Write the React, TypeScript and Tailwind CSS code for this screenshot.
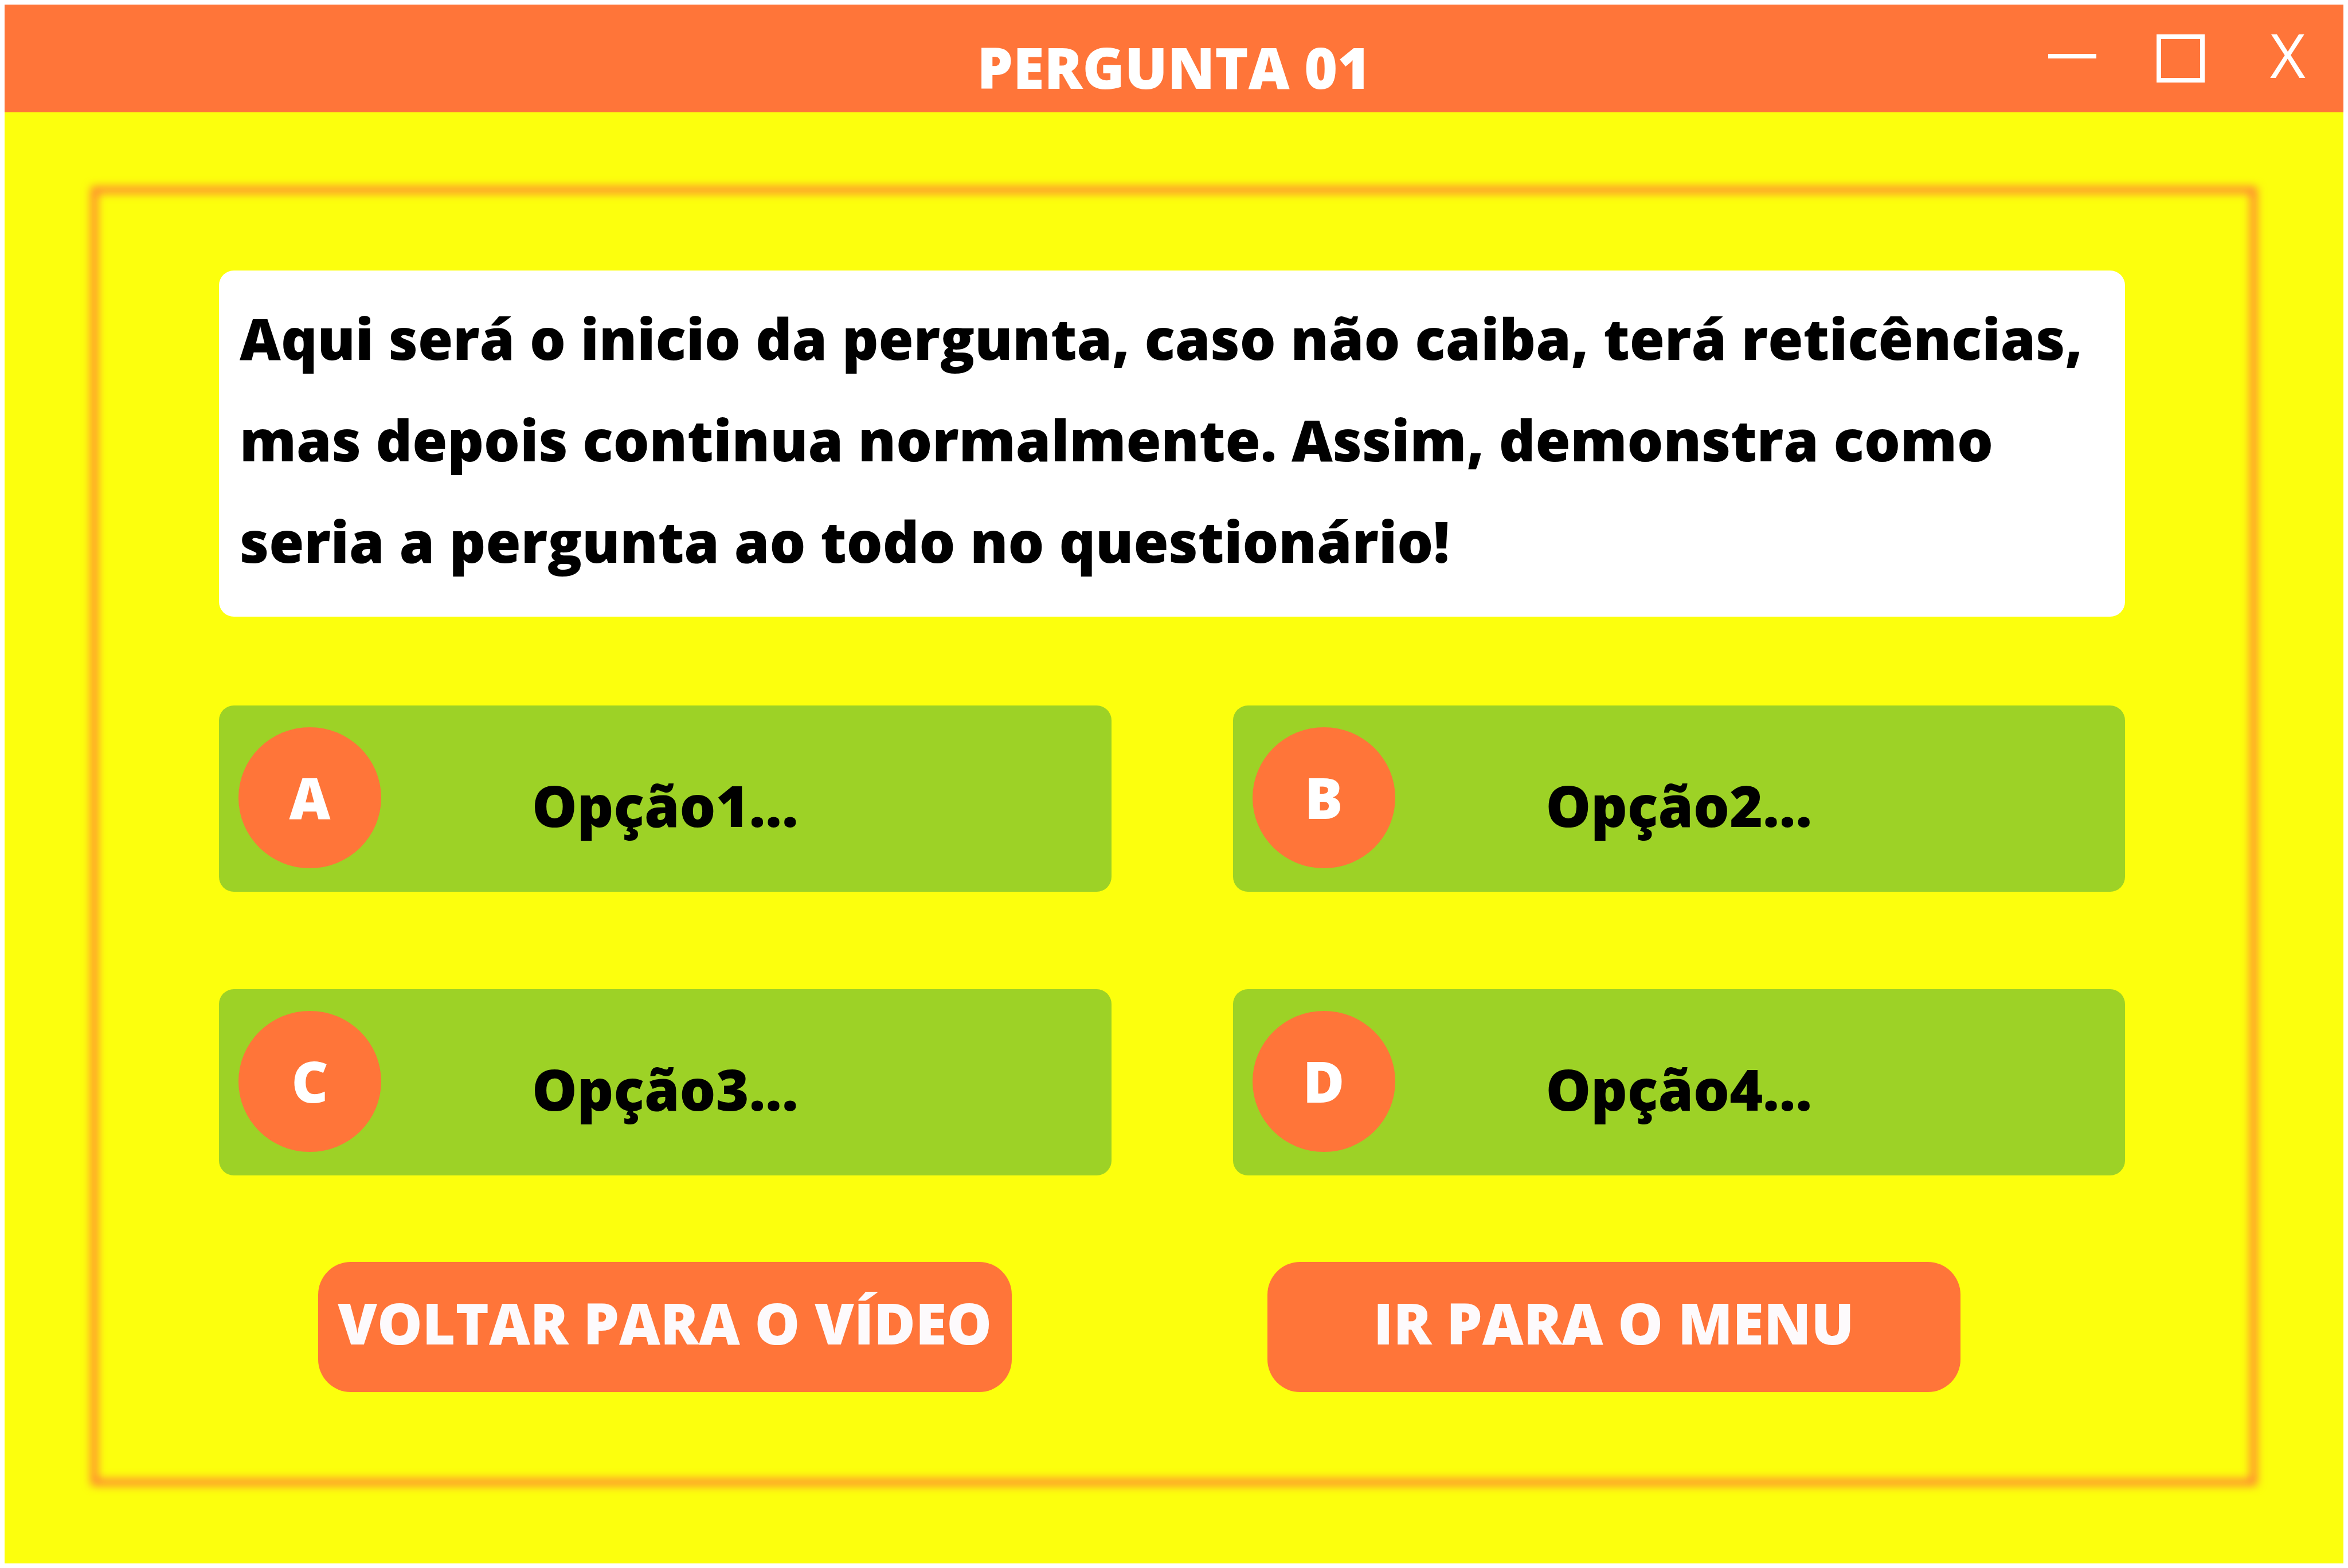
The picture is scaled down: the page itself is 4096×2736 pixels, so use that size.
const options = [
  { letter: "A", label: "Opção1..." },
  { letter: "B", label: "Opção2..." },
  { letter: "C", label: "Opção3..." },
  { letter: "D", label: "Opção4..." },
];

const actions = ["VOLTAR PARA O VÍDEO", "IR PARA O MENU"];

function WindowControls() {
  return (
    <div className="flex items-center gap-[105px] justify-self-end pr-[57px] text-white">
      <button type="button" aria-label="Minimizar">
        <svg className="size-[84px]" viewBox="0 0 84 84" aria-hidden="true">
          <path d="M0 38H84" stroke="currentColor" strokeWidth="8" />
        </svg>
      </button>
      <button type="button" aria-label="Maximizar">
        <svg className="size-[84px]" viewBox="0 0 84 84" fill="none" aria-hidden="true">
          <rect x="4" y="4" width="76" height="76" stroke="currentColor" strokeWidth="8" />
        </svg>
      </button>
      <button
        type="button"
        aria-label="Fechar"
        className="w-[80px] pb-4 text-center text-[107px] leading-[131px] font-medium"
      >
        X
      </button>
    </div>
  );
}

function Option({ letter, label }: { letter: string; label: string }) {
  return (
    <button
      type="button"
      className="grid grid-cols-[249px_1fr_249px] items-center rounded-[26px] bg-[#9dd226] px-[34px] pt-[38px] pb-[41px]"
    >
      <span className="flex h-[246px] items-center justify-center rounded-[50%] bg-[#ff7539] pb-1 text-white">
        {letter}
      </span>
      <span className="pt-[24px] text-center text-black">{label}</span>
    </button>
  );
}

export default function App() {
  return (
    <div className="flex min-h-screen flex-col bg-white p-2 font-['Open_Sans','Noto_Sans',sans-serif] text-[99px] leading-[131px] font-extrabold">
      <header className="grid grid-cols-[1fr_auto_1fr] items-center bg-[#ff7539]">
        <h1 className="col-start-2 pt-[43px] pb-[14px] text-white">PERGUNTA 01</h1>
        <WindowControls />
      </header>

      <main className="flex flex-1 flex-col bg-[#fcff0d] px-[151px] pt-[130px] pb-[136px]">
        <div className="relative flex-1 pt-[146px] pr-[230px] pl-[223px]">
          <div
            aria-hidden="true"
            className="pointer-events-none absolute inset-0 border-[11px] border-[#ff7539] blur-[8px]"
          />

          <div className="relative">
            <p className="rounded-[26px] bg-white pt-[29px] pr-[36px] pb-[44px] pl-[36px] leading-[177px] text-black">
              Aqui será o inicio da pergunta, caso não caiba, terá reticências, mas depois continua
              normalmente. Assim, demonstra como seria a pergunta ao todo no questionário!
            </p>

            <div className="mt-[155px] grid grid-cols-2 gap-x-[212px] gap-y-[170px]">
              {options.map((option) => (
                <Option key={option.letter} letter={option.letter} label={option.label} />
              ))}
            </div>

            <div className="mt-[151px] grid grid-cols-2 gap-[446px] pr-[287px] pl-[173px]">
              {actions.map((action) => (
                <button
                  key={action}
                  type="button"
                  className="rounded-[57px] bg-[#ff7539] pt-[40px] pb-[56px] whitespace-nowrap text-[#fdfafc]"
                >
                  {action}
                </button>
              ))}
            </div>
          </div>
        </div>
      </main>
    </div>
  );
}
